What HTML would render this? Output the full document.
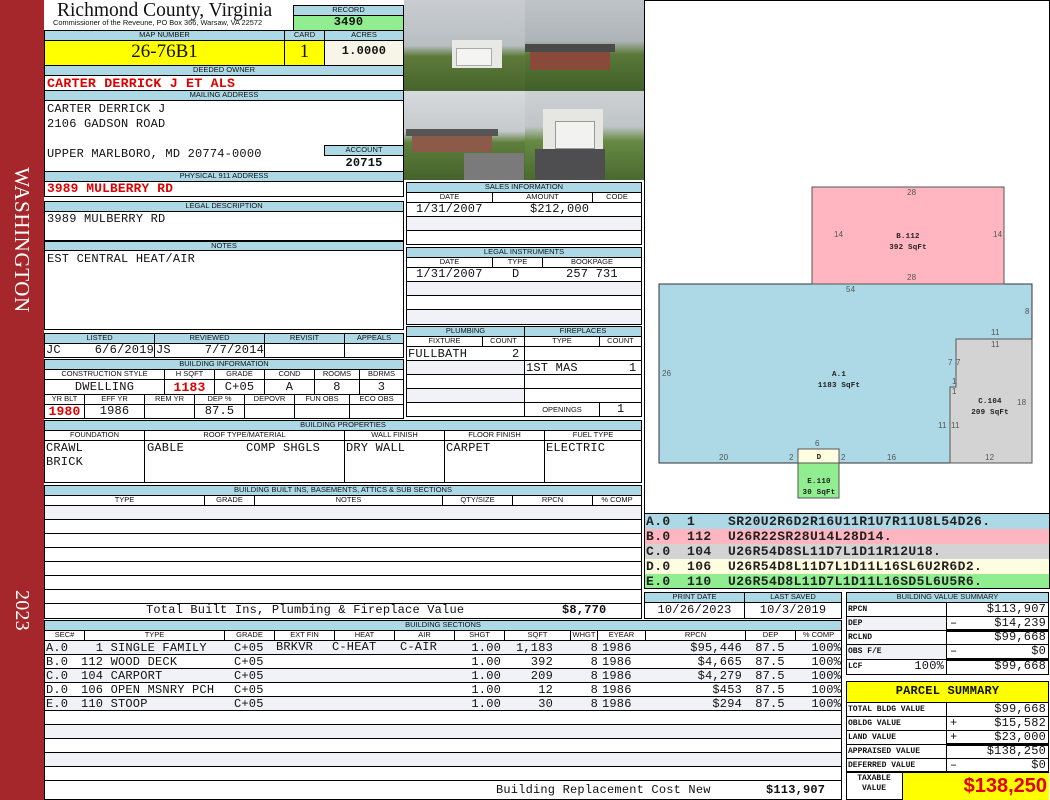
<!DOCTYPE html>
<html><head><meta charset="utf-8"><style>
*{box-sizing:border-box;margin:0;padding:0}
body{width:1050px;height:800px;position:relative;background:#fff;overflow:hidden;font-family:"Liberation Mono",monospace;font-size:12px;letter-spacing:0.2px;color:#111}
div{position:absolute}
.h{background:#add8e6;border:1px solid #000;font-family:"Liberation Sans",sans-serif;font-size:7.5px;letter-spacing:0;text-align:center;line-height:8px;color:#111;white-space:nowrap;overflow:hidden}
.b{border:1px solid #000;background:#fff}
.t{white-space:nowrap;line-height:13px}
.r{text-align:right}
.c{text-align:center}
.red{color:#e00000;font-weight:bold}
.rl{height:1px;background:#000}
.vl{width:1px;background:#000}
.lbl{font-size:8px;letter-spacing:0;font-family:"Liberation Mono",monospace}
</style></head><body>
<!-- sidebar -->
<div style="left:0;top:0;width:44px;height:800px;background:#a5272b"></div>
<div style="left:11px;top:157px;width:22px;height:166px;"><div style="left:0;top:0;width:166px;height:22px;transform-origin:0 0;transform:translate(22px,0) rotate(90deg);color:#fff;font-family:'Liberation Serif',serif;font-size:21px;letter-spacing:0.6px;line-height:22px;text-align:center">WASHINGTON</div></div>
<div style="left:11px;top:590px;width:22px;height:38px;"><div style="left:0;top:0;width:38px;height:22px;transform-origin:0 0;transform:translate(22px,0) rotate(90deg);color:#fff;font-family:'Liberation Serif',serif;font-size:20px;line-height:22px;text-align:center">2023</div></div>

<!-- header -->
<div class="t" style="left:57px;top:0px;font-family:'Liberation Serif',serif;font-size:19.5px;letter-spacing:0;line-height:21px">Richmond County, Virginia</div>
<div class="t" style="left:53px;top:19px;font-family:'Liberation Sans',sans-serif;font-size:7.4px;letter-spacing:0;line-height:8px">Commissioner of the Reveune, PO Box 366, Warsaw, VA 22572</div>
<div class="h" style="left:293px;top:5px;width:111px;height:11px">RECORD</div>
<div class="b" style="left:293px;top:15px;width:111px;height:16px;background:#90ee90"></div>
<div class="t c" style="left:293px;top:16px;width:111px;font-weight:bold;font-size:12px">3490</div>
<div class="h" style="left:44px;top:30px;width:241px;height:11px">MAP NUMBER</div>
<div class="h" style="left:284px;top:30px;width:41px;height:11px">CARD</div>
<div class="h" style="left:324px;top:30px;width:80px;height:11px">ACRES</div>
<div class="b" style="left:44px;top:40px;width:241px;height:26px;background:#ffff00"></div>
<div class="b" style="left:284px;top:40px;width:41px;height:26px;background:#ffff00"></div>
<div class="b" style="left:324px;top:40px;width:80px;height:26px;background:#f6f5e8"></div>
<div class="t c" style="left:44px;top:42px;width:241px;font-family:'Liberation Serif',serif;font-size:19px;letter-spacing:0;line-height:20px">26-76B1</div>
<div class="t c" style="left:284px;top:42px;width:41px;font-family:'Liberation Serif',serif;font-size:19px;line-height:20px">1</div>
<div class="t c" style="left:324px;top:45px;width:80px;font-weight:bold;font-size:12px">1.0000</div>
<div class="h" style="left:44px;top:65px;width:360px;height:11px">DEEDED OWNER</div>
<div class="b" style="left:44px;top:75px;width:360px;height:16px"></div>
<div class="t red" style="left:47px;top:77px;font-size:13.3px">CARTER DERRICK J ET ALS</div>
<div class="h" style="left:44px;top:90px;width:360px;height:11px">MAILING ADDRESS</div>
<div class="b" style="left:44px;top:100px;width:360px;height:72px"></div>
<div class="t" style="left:47px;top:103px">CARTER DERRICK J</div>
<div class="t" style="left:47px;top:118px">2106 GADSON ROAD</div>
<div class="t" style="left:47px;top:148px">UPPER MARLBORO, MD 20774-0000</div>
<div class="h" style="left:324px;top:145px;width:80px;height:11px">ACCOUNT</div>
<div class="t c" style="left:324px;top:157px;width:80px;font-weight:bold">20715</div>
<div class="h" style="left:44px;top:171px;width:360px;height:11px">PHYSICAL 911 ADDRESS</div>
<div class="b" style="left:44px;top:181px;width:360px;height:16px"></div>
<div class="t red" style="left:47px;top:182px;font-size:12.8px">3989 MULBERRY RD</div>
<div class="h" style="left:44px;top:201px;width:360px;height:11px">LEGAL DESCRIPTION</div>
<div class="b" style="left:44px;top:211px;width:360px;height:30px"></div>
<div class="t" style="left:47px;top:213px">3989 MULBERRY RD</div>
<div class="h" style="left:44px;top:241px;width:360px;height:11px">NOTES</div>
<div class="b" style="left:44px;top:250px;width:360px;height:80px"></div>
<div class="t" style="left:47px;top:253px">EST CENTRAL HEAT/AIR</div>

<!-- listed -->
<div class="h" style="left:44px;top:333px;width:111px;height:11px">LISTED</div>
<div class="h" style="left:154px;top:333px;width:111px;height:11px">REVIEWED</div>
<div class="h" style="left:264px;top:333px;width:81px;height:11px">REVISIT</div>
<div class="h" style="left:344px;top:333px;width:60px;height:11px">APPEALS</div>
<div class="b" style="left:44px;top:343px;width:111px;height:15px"></div>
<div class="b" style="left:154px;top:343px;width:111px;height:15px"></div>
<div class="b" style="left:264px;top:343px;width:81px;height:15px"></div>
<div class="b" style="left:344px;top:343px;width:60px;height:15px"></div>
<div class="t" style="left:46px;top:344px">JC</div><div class="t r" style="left:60px;top:344px;width:94px">6/6/2019</div>
<div class="t" style="left:156px;top:344px">JS</div><div class="t r" style="left:170px;top:344px;width:94px">7/7/2014</div>

<!-- building info -->
<div class="h" style="left:44px;top:359px;width:360px;height:11px">BUILDING INFORMATION</div>
<div class="h" style="left:44px;top:369px;width:121px;height:11px;background:#fff">CONSTRUCTION STYLE</div>
<div class="h" style="left:164px;top:369px;width:51px;height:11px;background:#fff">H SQFT</div>
<div class="h" style="left:214px;top:369px;width:51px;height:11px;background:#fff">GRADE</div>
<div class="h" style="left:264px;top:369px;width:51px;height:11px;background:#fff">COND</div>
<div class="h" style="left:314px;top:369px;width:46px;height:11px;background:#fff">ROOMS</div>
<div class="h" style="left:359px;top:369px;width:45px;height:11px;background:#fff">BDRMS</div>
<div class="b" style="left:44px;top:379px;width:121px;height:16px"></div>
<div class="b" style="left:164px;top:379px;width:51px;height:16px"></div>
<div class="b" style="left:214px;top:379px;width:51px;height:16px"></div>
<div class="b" style="left:264px;top:379px;width:51px;height:16px"></div>
<div class="b" style="left:314px;top:379px;width:46px;height:16px"></div>
<div class="b" style="left:359px;top:379px;width:45px;height:16px"></div>
<div class="t c" style="left:44px;top:381px;width:121px">DWELLING</div>
<div class="t c red" style="left:164px;top:381px;width:51px;font-size:13px">1183</div>
<div class="t c" style="left:214px;top:381px;width:51px">C+05</div>
<div class="t c" style="left:264px;top:381px;width:51px">A</div>
<div class="t c" style="left:314px;top:381px;width:46px">8</div>
<div class="t c" style="left:359px;top:381px;width:45px">3</div>
<div class="h" style="left:44px;top:394px;width:41px;height:11px;background:#fff">YR BLT</div>
<div class="h" style="left:84px;top:394px;width:61px;height:11px;background:#fff">EFF YR</div>
<div class="h" style="left:144px;top:394px;width:51px;height:11px;background:#fff">REM YR</div>
<div class="h" style="left:194px;top:394px;width:51px;height:11px;background:#fff">DEP %</div>
<div class="h" style="left:244px;top:394px;width:51px;height:11px;background:#fff">DEPOVR</div>
<div class="h" style="left:294px;top:394px;width:56px;height:11px;background:#fff">FUN OBS</div>
<div class="h" style="left:349px;top:394px;width:55px;height:11px;background:#fff">ECO OBS</div>
<div class="b" style="left:44px;top:404px;width:41px;height:15px"></div>
<div class="b" style="left:84px;top:404px;width:61px;height:15px"></div>
<div class="b" style="left:144px;top:404px;width:51px;height:15px"></div>
<div class="b" style="left:194px;top:404px;width:51px;height:15px"></div>
<div class="b" style="left:244px;top:404px;width:51px;height:15px"></div>
<div class="b" style="left:294px;top:404px;width:56px;height:15px"></div>
<div class="b" style="left:349px;top:404px;width:55px;height:15px"></div>
<div class="t c red" style="left:44px;top:405px;width:41px;font-size:13px">1980</div>
<div class="t c" style="left:84px;top:405px;width:61px">1986</div>
<div class="t c" style="left:194px;top:405px;width:51px">87.5</div>

<!-- building properties -->
<div class="h" style="left:44px;top:420px;width:598px;height:11px">BUILDING PROPERTIES</div>
<div class="h" style="left:44px;top:430px;width:101px;height:11px;background:#fff">FOUNDATION</div>
<div class="h" style="left:144px;top:430px;width:201px;height:11px;background:#fff">ROOF TYPE/MATERIAL</div>
<div class="h" style="left:344px;top:430px;width:101px;height:11px;background:#fff">WALL FINISH</div>
<div class="h" style="left:444px;top:430px;width:101px;height:11px;background:#fff">FLOOR FINISH</div>
<div class="h" style="left:544px;top:430px;width:98px;height:11px;background:#fff">FUEL TYPE</div>
<div class="b" style="left:44px;top:440px;width:101px;height:43px"></div>
<div class="b" style="left:144px;top:440px;width:201px;height:43px"></div>
<div class="b" style="left:344px;top:440px;width:101px;height:43px"></div>
<div class="b" style="left:444px;top:440px;width:101px;height:43px"></div>
<div class="b" style="left:544px;top:440px;width:98px;height:43px"></div>
<div class="t" style="left:46px;top:442px">CRAWL</div>
<div class="t" style="left:46px;top:456px">BRICK</div>
<div class="t" style="left:147px;top:442px">GABLE</div>
<div class="t" style="left:246px;top:442px">COMP SHGLS</div>
<div class="t" style="left:346px;top:442px">DRY WALL</div>
<div class="t" style="left:446px;top:442px">CARPET</div>
<div class="t" style="left:546px;top:442px">ELECTRIC</div>

<!-- built ins -->
<div class="h" style="left:44px;top:485px;width:598px;height:11px">BUILDING BUILT INS, BASEMENTS, ATTICS &amp; SUB SECTIONS</div>
<div class="h" style="left:44px;top:495px;width:161px;height:11px;background:#fff">TYPE</div>
<div class="h" style="left:204px;top:495px;width:51px;height:11px;background:#fff">GRADE</div>
<div class="h" style="left:254px;top:495px;width:189px;height:11px;background:#fff">NOTES</div>
<div class="h" style="left:442px;top:495px;width:71px;height:11px;background:#fff">QTY/SIZE</div>
<div class="h" style="left:512px;top:495px;width:81px;height:11px;background:#fff">RPCN</div>
<div class="h" style="left:592px;top:495px;width:50px;height:11px;background:#fff">% COMP</div>
<div class="b" style="left:44px;top:505px;width:598px;height:114px"></div>
<div style="left:45px;top:506px;width:596px;height:13px;background:#f0f2f8"></div>
<div class="rl" style="left:44px;top:519px;width:598px"></div>
<div class="rl" style="left:44px;top:533px;width:598px"></div>
<div class="rl" style="left:44px;top:547px;width:598px"></div>
<div class="rl" style="left:44px;top:561px;width:598px"></div>
<div class="rl" style="left:44px;top:575px;width:598px"></div>
<div class="rl" style="left:44px;top:589px;width:598px"></div>
<div class="rl" style="left:44px;top:603px;width:598px"></div>
<div class="t" style="left:146px;top:604px">Total Built Ins, Plumbing &amp; Fireplace Value</div>
<div class="t" style="left:562px;top:604px;font-weight:bold">$8,770</div>

<!-- building sections -->
<div class="h" style="left:44px;top:620px;width:798px;height:11px">BUILDING SECTIONS</div>
<div class="h" style="left:44px;top:630px;width:41px;height:11px;background:#fff">SEC#</div>
<div class="h" style="left:84px;top:630px;width:141px;height:11px;background:#fff">TYPE</div>
<div class="h" style="left:224px;top:630px;width:51px;height:11px;background:#fff">GRADE</div>
<div class="h" style="left:274px;top:630px;width:61px;height:11px;background:#fff">EXT FIN</div>
<div class="h" style="left:334px;top:630px;width:61px;height:11px;background:#fff">HEAT</div>
<div class="h" style="left:394px;top:630px;width:61px;height:11px;background:#fff">AIR</div>
<div class="h" style="left:454px;top:630px;width:51px;height:11px;background:#fff">SHGT</div>
<div class="h" style="left:504px;top:630px;width:67px;height:11px;background:#fff">SQFT</div>
<div class="h" style="left:570px;top:630px;width:28px;height:11px;background:#fff">WHGT</div>
<div class="h" style="left:597px;top:630px;width:49px;height:11px;background:#fff">EYEAR</div>
<div class="h" style="left:645px;top:630px;width:101px;height:11px;background:#fff">RPCN</div>
<div class="h" style="left:745px;top:630px;width:51px;height:11px;background:#fff">DEP</div>
<div class="h" style="left:795px;top:630px;width:47px;height:11px;background:#fff">% COMP</div>
<div class="b" style="left:44px;top:640px;width:798px;height:160px"></div>
<div style="left:45px;top:641px;width:796px;height:13px;background:#f0f2f8"></div>
<div style="left:45px;top:669px;width:796px;height:13px;background:#f0f2f8"></div>
<div style="left:45px;top:697px;width:796px;height:13px;background:#f0f2f8"></div>
<div style="left:45px;top:725px;width:796px;height:13px;background:#f0f2f8"></div>
<div style="left:45px;top:753px;width:796px;height:13px;background:#f0f2f8"></div>
<div class="rl" style="left:44px;top:654px;width:798px"></div>
<div class="rl" style="left:44px;top:668px;width:798px"></div>
<div class="rl" style="left:44px;top:682px;width:798px"></div>
<div class="rl" style="left:44px;top:696px;width:798px"></div>
<div class="rl" style="left:44px;top:710px;width:798px"></div>
<div class="rl" style="left:44px;top:724px;width:798px"></div>
<div class="rl" style="left:44px;top:738px;width:798px"></div>
<div class="rl" style="left:44px;top:752px;width:798px"></div>
<div class="rl" style="left:44px;top:766px;width:798px"></div>
<div class="rl" style="left:44px;top:780px;width:798px"></div>
<div class="t" style="left:46px;top:641px;line-height:14px">A.0<br>B.0<br>C.0<br>D.0<br>E.0</div>
<div class="t" style="left:81px;top:641px;line-height:14px">&nbsp;&nbsp;1 SINGLE FAMILY<br>112 WOOD DECK<br>104 CARPORT<br>106 OPEN MSNRY PCH<br>110 STOOP</div>
<div class="t" style="left:234px;top:641px;line-height:14px">C+05<br>C+05<br>C+05<br>C+05<br>C+05</div>
<div class="t" style="left:276px;top:641px">BRKVR</div><div class="t" style="left:332px;top:641px">C-HEAT</div><div class="t" style="left:400px;top:641px">C-AIR</div>
<div class="t r" style="left:440px;top:641px;width:61px;line-height:14px">1.00<br>1.00<br>1.00<br>1.00<br>1.00</div>
<div class="t r" style="left:500px;top:641px;width:53px;line-height:14px">1,183<br>392<br>209<br>12<br>30</div>
<div class="t r" style="left:560px;top:641px;width:38px;line-height:14px">8<br>8<br>8<br>8<br>8</div>
<div class="t" style="left:602px;top:641px;line-height:14px">1986<br>1986<br>1986<br>1986<br>1986</div>
<div class="t r" style="left:645px;top:641px;width:97px;line-height:14px">$95,446<br>$4,665<br>$4,279<br>$453<br>$294</div>
<div class="t c" style="left:745px;top:641px;width:50px;line-height:14px">87.5<br>87.5<br>87.5<br>87.5<br>87.5</div>
<div class="t r" style="left:795px;top:641px;width:46px;line-height:14px">100%<br>100%<br>100%<br>100%<br>100%</div>
<div class="t" style="left:496px;top:784px">Building Replacement Cost New</div>
<div class="t" style="left:766px;top:784px;font-weight:bold">$113,907</div>

<!-- photos -->
<div style="left:404px;top:0;width:121px;height:91px;background:linear-gradient(#c9cdd0 0,#b8bec2 50%,#5d7a3a 62%,#48652c 100%)"><div style="left:48px;top:40px;width:50px;height:28px;background:#e8e8e4"></div><div style="left:52px;top:48px;width:36px;height:18px;background:#f4f4f2;border:1px solid #aaa"></div></div>
<div style="left:525px;top:0;width:119px;height:91px;background:linear-gradient(#bfc4c8 0,#aeb4b8 45%,#5a7838 60%,#40602a 100%)"><div style="left:5px;top:50px;width:80px;height:20px;background:#8a4a3a"></div><div style="left:0;top:44px;width:90px;height:8px;background:#4a4a4a"></div></div>
<div style="left:404px;top:91px;width:121px;height:89px;background:linear-gradient(#d6dadc 0,#c6cacd 45%,#5e7f3c 58%,#44632c 100%)"><div style="left:8px;top:43px;width:80px;height:18px;background:#8c5a48"></div><div style="left:2px;top:38px;width:92px;height:7px;background:#555"></div><div style="left:60px;top:62px;width:60px;height:27px;background:#7a7a7a"></div></div>
<div style="left:525px;top:91px;width:119px;height:89px;background:linear-gradient(#cdd1d4 0,#c0c5c8 40%,#678a44 56%,#4a6a2e 100%)"><div style="left:18px;top:18px;width:60px;height:40px;background:#e6e6e2"></div><div style="left:30px;top:30px;width:40px;height:28px;background:#f2f2f0;border:1px solid #999"></div><div style="left:10px;top:58px;width:70px;height:31px;background:#4e4e50"></div></div>

<!-- sales -->
<div class="h" style="left:406px;top:182px;width:236px;height:11px">SALES INFORMATION</div>
<div class="h" style="left:406px;top:192px;width:87px;height:11px;background:#fff">DATE</div>
<div class="h" style="left:492px;top:192px;width:101px;height:11px;background:#fff">AMOUNT</div>
<div class="h" style="left:592px;top:192px;width:50px;height:11px;background:#fff">CODE</div>
<div class="b" style="left:406px;top:202px;width:236px;height:43px"></div>
<div style="left:407px;top:217px;width:234px;height:13px;background:#f0f2f8"></div>
<div class="rl" style="left:406px;top:216px;width:236px"></div>
<div class="rl" style="left:406px;top:230px;width:236px"></div>
<div class="t" style="left:416px;top:203px">1/31/2007</div>
<div class="t" style="left:530px;top:203px">$212,000</div>
<div class="h" style="left:406px;top:247px;width:236px;height:11px">LEGAL INSTRUMENTS</div>
<div class="h" style="left:406px;top:257px;width:87px;height:11px;background:#fff">DATE</div>
<div class="h" style="left:492px;top:257px;width:51px;height:11px;background:#fff">TYPE</div>
<div class="h" style="left:542px;top:257px;width:100px;height:11px;background:#fff">BOOKPAGE</div>
<div class="b" style="left:406px;top:267px;width:236px;height:58px"></div>
<div style="left:407px;top:282px;width:234px;height:13px;background:#f0f2f8"></div>
<div style="left:407px;top:310px;width:234px;height:14px;background:#f0f2f8"></div>
<div class="rl" style="left:406px;top:281px;width:236px"></div>
<div class="rl" style="left:406px;top:295px;width:236px"></div>
<div class="rl" style="left:406px;top:309px;width:236px"></div>
<div class="t" style="left:416px;top:268px">1/31/2007</div>
<div class="t" style="left:512px;top:268px">D</div>
<div class="t" style="left:566px;top:268px">257 731</div>
<div class="h" style="left:406px;top:326px;width:119px;height:11px">PLUMBING</div>
<div class="h" style="left:524px;top:326px;width:118px;height:11px">FIREPLACES</div>
<div class="h" style="left:406px;top:336px;width:77px;height:11px;background:#fff">FIXTURE</div>
<div class="h" style="left:482px;top:336px;width:43px;height:11px;background:#fff">COUNT</div>
<div class="h" style="left:524px;top:336px;width:76px;height:11px;background:#fff">TYPE</div>
<div class="h" style="left:599px;top:336px;width:43px;height:11px;background:#fff">COUNT</div>
<div class="b" style="left:406px;top:346px;width:119px;height:71px"></div>
<div class="b" style="left:524px;top:346px;width:118px;height:71px"></div>
<div style="left:407px;top:361px;width:117px;height:13px;background:#f0f2f8"></div>
<div style="left:407px;top:389px;width:117px;height:13px;background:#f0f2f8"></div>
<div class="rl" style="left:406px;top:360px;width:236px"></div>
<div class="rl" style="left:406px;top:374px;width:236px"></div>
<div class="rl" style="left:406px;top:388px;width:236px"></div>
<div class="rl" style="left:406px;top:402px;width:119px"></div>
<div class="b" style="left:524px;top:402px;width:76px;height:15px;font-family:'Liberation Sans',sans-serif;font-size:7.5px;letter-spacing:0;text-align:center;line-height:13px">OPENINGS</div>
<div class="b" style="left:599px;top:402px;width:43px;height:15px"></div>
<div class="t" style="left:408px;top:348px">FULLBATH</div><div class="t" style="left:512px;top:348px">2</div>
<div class="t" style="left:526px;top:362px">1ST MAS</div><div class="t" style="left:629px;top:362px">1</div>
<div class="t" style="left:617px;top:403px">1</div>

<!-- sketch -->
<div style="left:644px;top:0;width:406px;height:514px;border:1px solid #000"></div>
<svg style="position:absolute;left:644px;top:0" width="406" height="514" font-family="Liberation Sans, sans-serif" font-size="8">
<rect x="15" y="284" width="373" height="179" fill="#add8e6" stroke="#333"/>
<rect x="168" y="187" width="192" height="97" fill="#ffb6c1" stroke="#555"/>
<polygon points="312,339 388,339 388,463 306,463 306,387 312,387" fill="#d3d3d3" stroke="#555"/>
<rect x="154" y="449" width="41" height="14" fill="#fffde0" stroke="#555"/>
<rect x="154" y="463" width="41" height="35" fill="#90ee90" stroke="#555"/>
<g fill="#555"><text x="263" y="195">28</text><text x="190" y="237">14</text><text x="349" y="237">14</text><text x="263" y="280">28</text>
<text x="202" y="292">54</text><text x="18" y="376">26</text><text x="381" y="314">8</text><text x="347" y="335">11</text><text x="347" y="347">11</text>
<text x="304" y="365">7</text><text x="312" y="365">7</text><text x="308" y="384">1</text><text x="308" y="394">1</text><text x="373" y="405">18</text>
<text x="294" y="428">11</text><text x="307" y="428">11</text><text x="171" y="446">6</text><text x="75" y="460">20</text><text x="145" y="460">2</text><text x="197" y="460">2</text><text x="243" y="460">16</text><text x="341" y="460">12</text></g>
<g fill="#222" font-family="Liberation Mono, monospace" font-size="7.5" font-weight="bold" text-anchor="middle">
<text x="264" y="238">B.112</text><text x="264" y="249">392 SqFt</text>
<text x="195" y="376">A.1</text><text x="195" y="387">1183 SqFt</text>
<text x="346" y="403">C.104</text><text x="346" y="414">209 SqFt</text>
<text x="175" y="459">D</text><text x="175" y="483">E.110</text><text x="175" y="494">30 SqFt</text></g>
</svg>

<!-- code rows -->
<div style="left:644px;top:513px;width:406px;height:76px;border:1px solid #000"></div>
<div style="left:645px;top:514px;width:404px;height:15px;background:#add8e6"></div>
<div style="left:645px;top:529px;width:404px;height:15px;background:#ffb6c1"></div>
<div style="left:645px;top:544px;width:404px;height:15px;background:#d3d3d3"></div>
<div style="left:645px;top:559px;width:404px;height:15px;background:#fffde0"></div>
<div style="left:645px;top:574px;width:404px;height:14px;background:#90ee90"></div>
<div class="t" style="left:646px;top:514px;font-weight:bold;font-size:13px;letter-spacing:0.4px;line-height:15px;color:#222">A.0<br>B.0<br>C.0<br>D.0<br>E.0</div>
<div class="t" style="left:687px;top:514px;font-weight:bold;font-size:13px;letter-spacing:0.4px;line-height:15px;color:#222">1<br>112<br>104<br>106<br>110</div>
<div class="t" style="left:728px;top:514px;font-weight:bold;font-size:13px;letter-spacing:0.4px;line-height:15px;color:#222">SR20U2R6D2R16U11R1U7R11U8L54D26.<br>U26R22SR28U14L28D14.<br>U26R54D8SL11D7L1D11R12U18.<br>U26R54D8L11D7L1D11L16SL6U2R6D2.<br>U26R54D8L11D7L1D11L16SD5L6U5R6.</div>

<!-- print date -->
<div class="h" style="left:644px;top:592px;width:101px;height:11px">PRINT DATE</div>
<div class="h" style="left:744px;top:592px;width:98px;height:11px">LAST SAVED</div>
<div class="b" style="left:644px;top:602px;width:101px;height:17px"></div>
<div class="b" style="left:744px;top:602px;width:98px;height:17px"></div>
<div class="t c" style="left:644px;top:604px;width:101px">10/26/2023</div>
<div class="t c" style="left:744px;top:604px;width:98px">10/3/2019</div>

<!-- value summary -->
<div class="h" style="left:846px;top:592px;width:203px;height:11px">BUILDING VALUE SUMMARY</div>
<div class="b" style="left:846px;top:602px;width:203px;height:73px"></div>
<div class="vl" style="left:946px;top:602px;height:73px"></div>
<div class="rl" style="left:846px;top:616px;width:203px"></div>
<div class="rl" style="left:846px;top:630px;width:203px"></div>
<div style="left:946px;top:629px;width:103px;height:3px;background:#000"></div>
<div class="rl" style="left:846px;top:644px;width:203px"></div>
<div class="rl" style="left:846px;top:659px;width:203px"></div>
<div style="left:946px;top:658px;width:103px;height:3px;background:#000"></div>
<div style="left:847px;top:617px;width:99px;height:13px;background:#f0f2f8"></div>
<div style="left:847px;top:645px;width:99px;height:14px;background:#f0f2f8"></div>
<div class="t lbl" style="left:848px;top:603px;font-weight:bold">RPCN</div><div class="t r" style="left:948px;top:603px;width:98px">$113,907</div>
<div class="t lbl" style="left:848px;top:617px;font-weight:bold">DEP</div><div class="t" style="left:950px;top:617px">–</div><div class="t r" style="left:948px;top:617px;width:98px">$14,239</div>
<div class="t lbl" style="left:848px;top:631px;font-weight:bold">RCLND</div><div class="t r" style="left:948px;top:631px;width:98px">$99,668</div>
<div class="t lbl" style="left:848px;top:645px;font-weight:bold">OBS F/E</div><div class="t" style="left:950px;top:645px">–</div><div class="t r" style="left:948px;top:645px;width:98px">$0</div>
<div class="t lbl" style="left:848px;top:660px;font-weight:bold">LCF</div><div class="t r" style="left:880px;top:660px;width:64px">100%</div><div class="t r" style="left:948px;top:660px;width:98px">$99,668</div>

<!-- parcel summary -->
<div class="b" style="left:846px;top:681px;width:203px;height:22px;background:#ffff00"></div>
<div class="t c" style="left:846px;top:685px;width:203px;font-family:'Liberation Mono',monospace;font-weight:bold;font-size:12px">PARCEL SUMMARY</div>
<div class="b" style="left:846px;top:702px;width:203px;height:98px"></div>
<div class="vl" style="left:946px;top:702px;height:70px"></div>
<div class="rl" style="left:846px;top:716px;width:203px"></div>
<div class="rl" style="left:846px;top:730px;width:203px"></div>
<div class="rl" style="left:846px;top:744px;width:203px"></div>
<div style="left:946px;top:743px;width:103px;height:3px;background:#000"></div>
<div class="rl" style="left:846px;top:758px;width:203px"></div>
<div style="left:846px;top:771px;width:203px;height:2px;background:#000"></div>
<div class="t lbl" style="left:848px;top:703px;font-weight:bold">TOTAL BLDG VALUE</div><div class="t r" style="left:948px;top:703px;width:98px">$99,668</div>
<div class="t lbl" style="left:848px;top:717px;font-weight:bold">OBLDG VALUE</div><div class="t" style="left:950px;top:717px">+</div><div class="t r" style="left:948px;top:717px;width:98px">$15,582</div>
<div class="t lbl" style="left:848px;top:731px;font-weight:bold">LAND VALUE</div><div class="t" style="left:950px;top:731px">+</div><div class="t r" style="left:948px;top:731px;width:98px">$23,000</div>
<div class="t lbl" style="left:848px;top:745px;font-weight:bold">APPRAISED VALUE</div><div class="t r" style="left:948px;top:745px;width:98px">$138,250</div>
<div class="t lbl" style="left:848px;top:759px;font-weight:bold">DEFERRED VALUE</div><div class="t" style="left:950px;top:759px">–</div><div class="t r" style="left:948px;top:759px;width:98px">$0</div>
<div class="t lbl c" style="left:846px;top:774px;width:56px;font-weight:bold;line-height:10px">TAXABLE<br>VALUE</div>
<div style="left:902px;top:773px;width:147px;height:27px;background:#ffff00;border-left:1px solid #000"></div>
<div class="t r" style="left:902px;top:773px;width:145px;font-family:'Liberation Sans',sans-serif;letter-spacing:0;font-weight:bold;font-size:20px;line-height:26px;color:#e00000">$138,250</div>
</body></html>
